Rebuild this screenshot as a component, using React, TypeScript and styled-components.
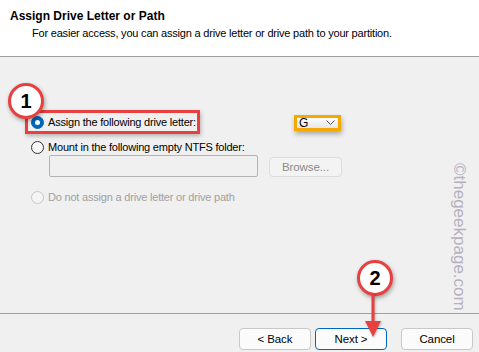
import styled, { createGlobalStyle } from "styled-components";

const GlobalStyle = createGlobalStyle`
  html, body {
    margin: 0;
    padding: 0;
    background: #f0f0f0;
  }
  body {
    font-family: "Liberation Sans", Arial, sans-serif;
    font-size: 11px;
    letter-spacing: -0.2px;
    color: #000;
  }
`;

const colors = {
  red: "#e8403e",
  orange: "#f5a900",
  blue: "#0067c0",
  line: "#a0a0a0",
  disabled: "#a0a0a0"
};

const Dialog = styled.div`
  position: relative;
  width: 479px;
  height: 352px;
  overflow: hidden;
  background: #f0f0f0;
  display: flex;
  flex-direction: column;
`;

const Header = styled.header`
  height: 57px;
  box-sizing: border-box;
  background: #fff;
  border-bottom: 1px solid ${colors.line};
  padding: 10px 0 0 10px;
`;

const Title = styled.h1`
  margin: 0;
  font-size: 12px;
  font-weight: bold;
  letter-spacing: 0;
  line-height: 12px;
`;

const Subtitle = styled.p`
  margin: 4px 0 0 22px;
  line-height: 14px;
`;

const Body = styled.main`
  flex: 1;
  padding: 53px 0 0 31px;
  display: flex;
  flex-direction: column;
`;

const OptionRow = styled.div<{ $gap?: number }>`
  display: flex;
  align-items: center;
  height: 16px;
  margin-top: ${(p) => p.$gap ?? 0}px;
`;

const Radio = styled.span<{ $checked?: boolean; $disabled?: boolean }>`
  box-sizing: border-box;
  width: 13px;
  height: 13px;
  border-radius: 50%;
  flex: none;
  margin-right: 4px;
  border: 1px solid ${(p) => (p.$checked ? colors.blue : p.$disabled ? "#c8c8c8" : "#333")};
  background: ${(p) => (p.$checked ? colors.blue : p.$disabled ? "#f4f4f4" : "#f7f7f7")};
  display: flex;
  align-items: center;
  justify-content: center;

  &::after {
    content: "";
    display: ${(p) => (p.$checked ? "block" : "none")};
    width: 5px;
    height: 5px;
    border-radius: 50%;
    background: #fff;
  }
`;

const Label = styled.span<{ $disabled?: boolean }>`
  color: ${(p) => (p.$disabled ? colors.disabled : "#000")};
  white-space: nowrap;
`;

const Highlight = styled.div`
  display: flex;
  align-items: center;
  width: 175px;
  height: 24px;
  margin-left: -6px;
  padding-left: 3px;
  box-sizing: border-box;
  border: 3px solid ${colors.red};
  box-shadow: 1px 2px 4px rgba(0, 0, 0, 0.25);
`;

const FirstRow = styled.div`
  display: flex;
  align-items: center;
  gap: 94px;
`;

const Combo = styled.div`
  box-sizing: border-box;
  width: 47px;
  height: 16px;
  border: 3px solid ${colors.orange};
  background: linear-gradient(#fdfdfd, #e6e6e6);
  box-shadow: 1px 3px 5px rgba(0, 0, 0, 0.3);
  display: flex;
  align-items: center;
  justify-content: space-between;
  padding: 0 3px 0 2px;
  font-size: 12px;
  letter-spacing: 0;
  line-height: 10px;
  margin-top: 1px;
`;

const FolderRow = styled.div`
  display: flex;
  align-items: flex-end;
  gap: 11px;
  margin: 0 0 0 18px;
`;

const FolderInput = styled.div`
  box-sizing: border-box;
  width: 209px;
  height: 22px;
  border: 1px solid #b4b4b4;
  border-radius: 2px;
  background: #f0f0f0;
`;

const Button = styled.button<{ $primary?: boolean; $disabled?: boolean }>`
  box-sizing: border-box;
  width: ${(p) => (p.$disabled ? 73 : 72)}px;
  height: ${(p) => (p.$disabled ? 20 : 22)}px;
  border: 1px solid ${(p) => (p.$primary ? colors.blue : p.$disabled ? "#dcdcdc" : "#c8c8c8")};
  border-radius: 4px;
  background: ${(p) => (p.$disabled ? "#f3f3f3" : "#fbfbfb")};
  color: ${(p) => (p.$disabled ? "#8a8a8a" : "#000")};
  font-family: "Liberation Sans", Arial, sans-serif;
  font-size: 11.5px;
  letter-spacing: -0.1px;
  padding: 0;
  cursor: default;
`;

const Footer = styled.footer`
  height: 39px;
  box-sizing: border-box;
  border-top: 1px solid ${colors.line};
  display: flex;
  justify-content: flex-end;
  align-items: flex-start;
  padding: 14px 6px 0 0;
  gap: 4px;
`;

const CancelButton = styled(Button)`
  margin-left: 10px;
`;

const Badge = styled.div<{ $x: number; $y: number }>`
  position: absolute;
  left: ${(p) => p.$x}px;
  top: ${(p) => p.$y}px;
  width: 36px;
  height: 36px;
  box-sizing: border-box;
  border-radius: 50%;
  border: 3px solid ${colors.red};
  background: #fff;
  box-shadow: 1px 2px 4px rgba(0, 0, 0, 0.35);
  display: flex;
  align-items: center;
  justify-content: center;
  font-size: 20px;
  font-weight: bold;
  letter-spacing: 0;
  color: #000;
  z-index: 2;
`;

const ArrowSvg = styled.svg`
  position: absolute;
  left: 364px;
  top: 293px;
  z-index: 3;
  filter: drop-shadow(1px 1px 1px rgba(0, 0, 0, 0.25));
`;

const Watermark = styled.div`
  position: absolute;
  left: 449px;
  top: 163px;
  writing-mode: vertical-rl;
  text-orientation: sideways;
  font-family: "Liberation Sans", Arial, sans-serif;
  font-size: 17px;
  letter-spacing: 0;
  color: #b6b0c0;
`;

function Chevron() {
  return (
    <svg width="9" height="5" viewBox="0 0 9 5">
      <path d="M0.5 0.5 L4.5 4.5 L8.5 0.5" fill="none" stroke="#555" strokeWidth="1" />
    </svg>
  );
}

export default function App() {
  return (
    <>
      <GlobalStyle />
      <Dialog>
        <Header>
          <Title>Assign Drive Letter or Path</Title>
          <Subtitle>For easier access, you can assign a drive letter or drive path to your partition.</Subtitle>
        </Header>
        <Body>
          <FirstRow>
            <Highlight>
              <Radio $checked />
              <Label>Assign the following drive letter:</Label>
            </Highlight>
            <Combo>
              <span>G</span>
              <Chevron />
            </Combo>
          </FirstRow>
          <OptionRow $gap={5}>
            <Radio />
            <Label>Mount in the following empty NTFS folder:</Label>
          </OptionRow>
          <FolderRow>
            <FolderInput />
            <Button $disabled>Browse...</Button>
          </FolderRow>
          <OptionRow $gap={12}>
            <Radio $disabled />
            <Label $disabled>Do not assign a drive letter or drive path</Label>
          </OptionRow>
        </Body>
        <Footer>
          <Button>&lt; Back</Button>
          <Button $primary>Next &gt;</Button>
          <CancelButton>Cancel</CancelButton>
        </Footer>
        <Badge $x={8} $y={83}>1</Badge>
        <Badge $x={357} $y={260}>2</Badge>
        <ArrowSvg width="18" height="46" viewBox="0 0 18 46">
          <line x1="9" y1="0" x2="9" y2="32" stroke={colors.red} strokeWidth="3" />
          <path d="M1 28 L17 28 L9 44 Z" fill={colors.red} />
        </ArrowSvg>
        <Watermark>©thegeekpage.com</Watermark>
      </Dialog>
    </>
  );
}
